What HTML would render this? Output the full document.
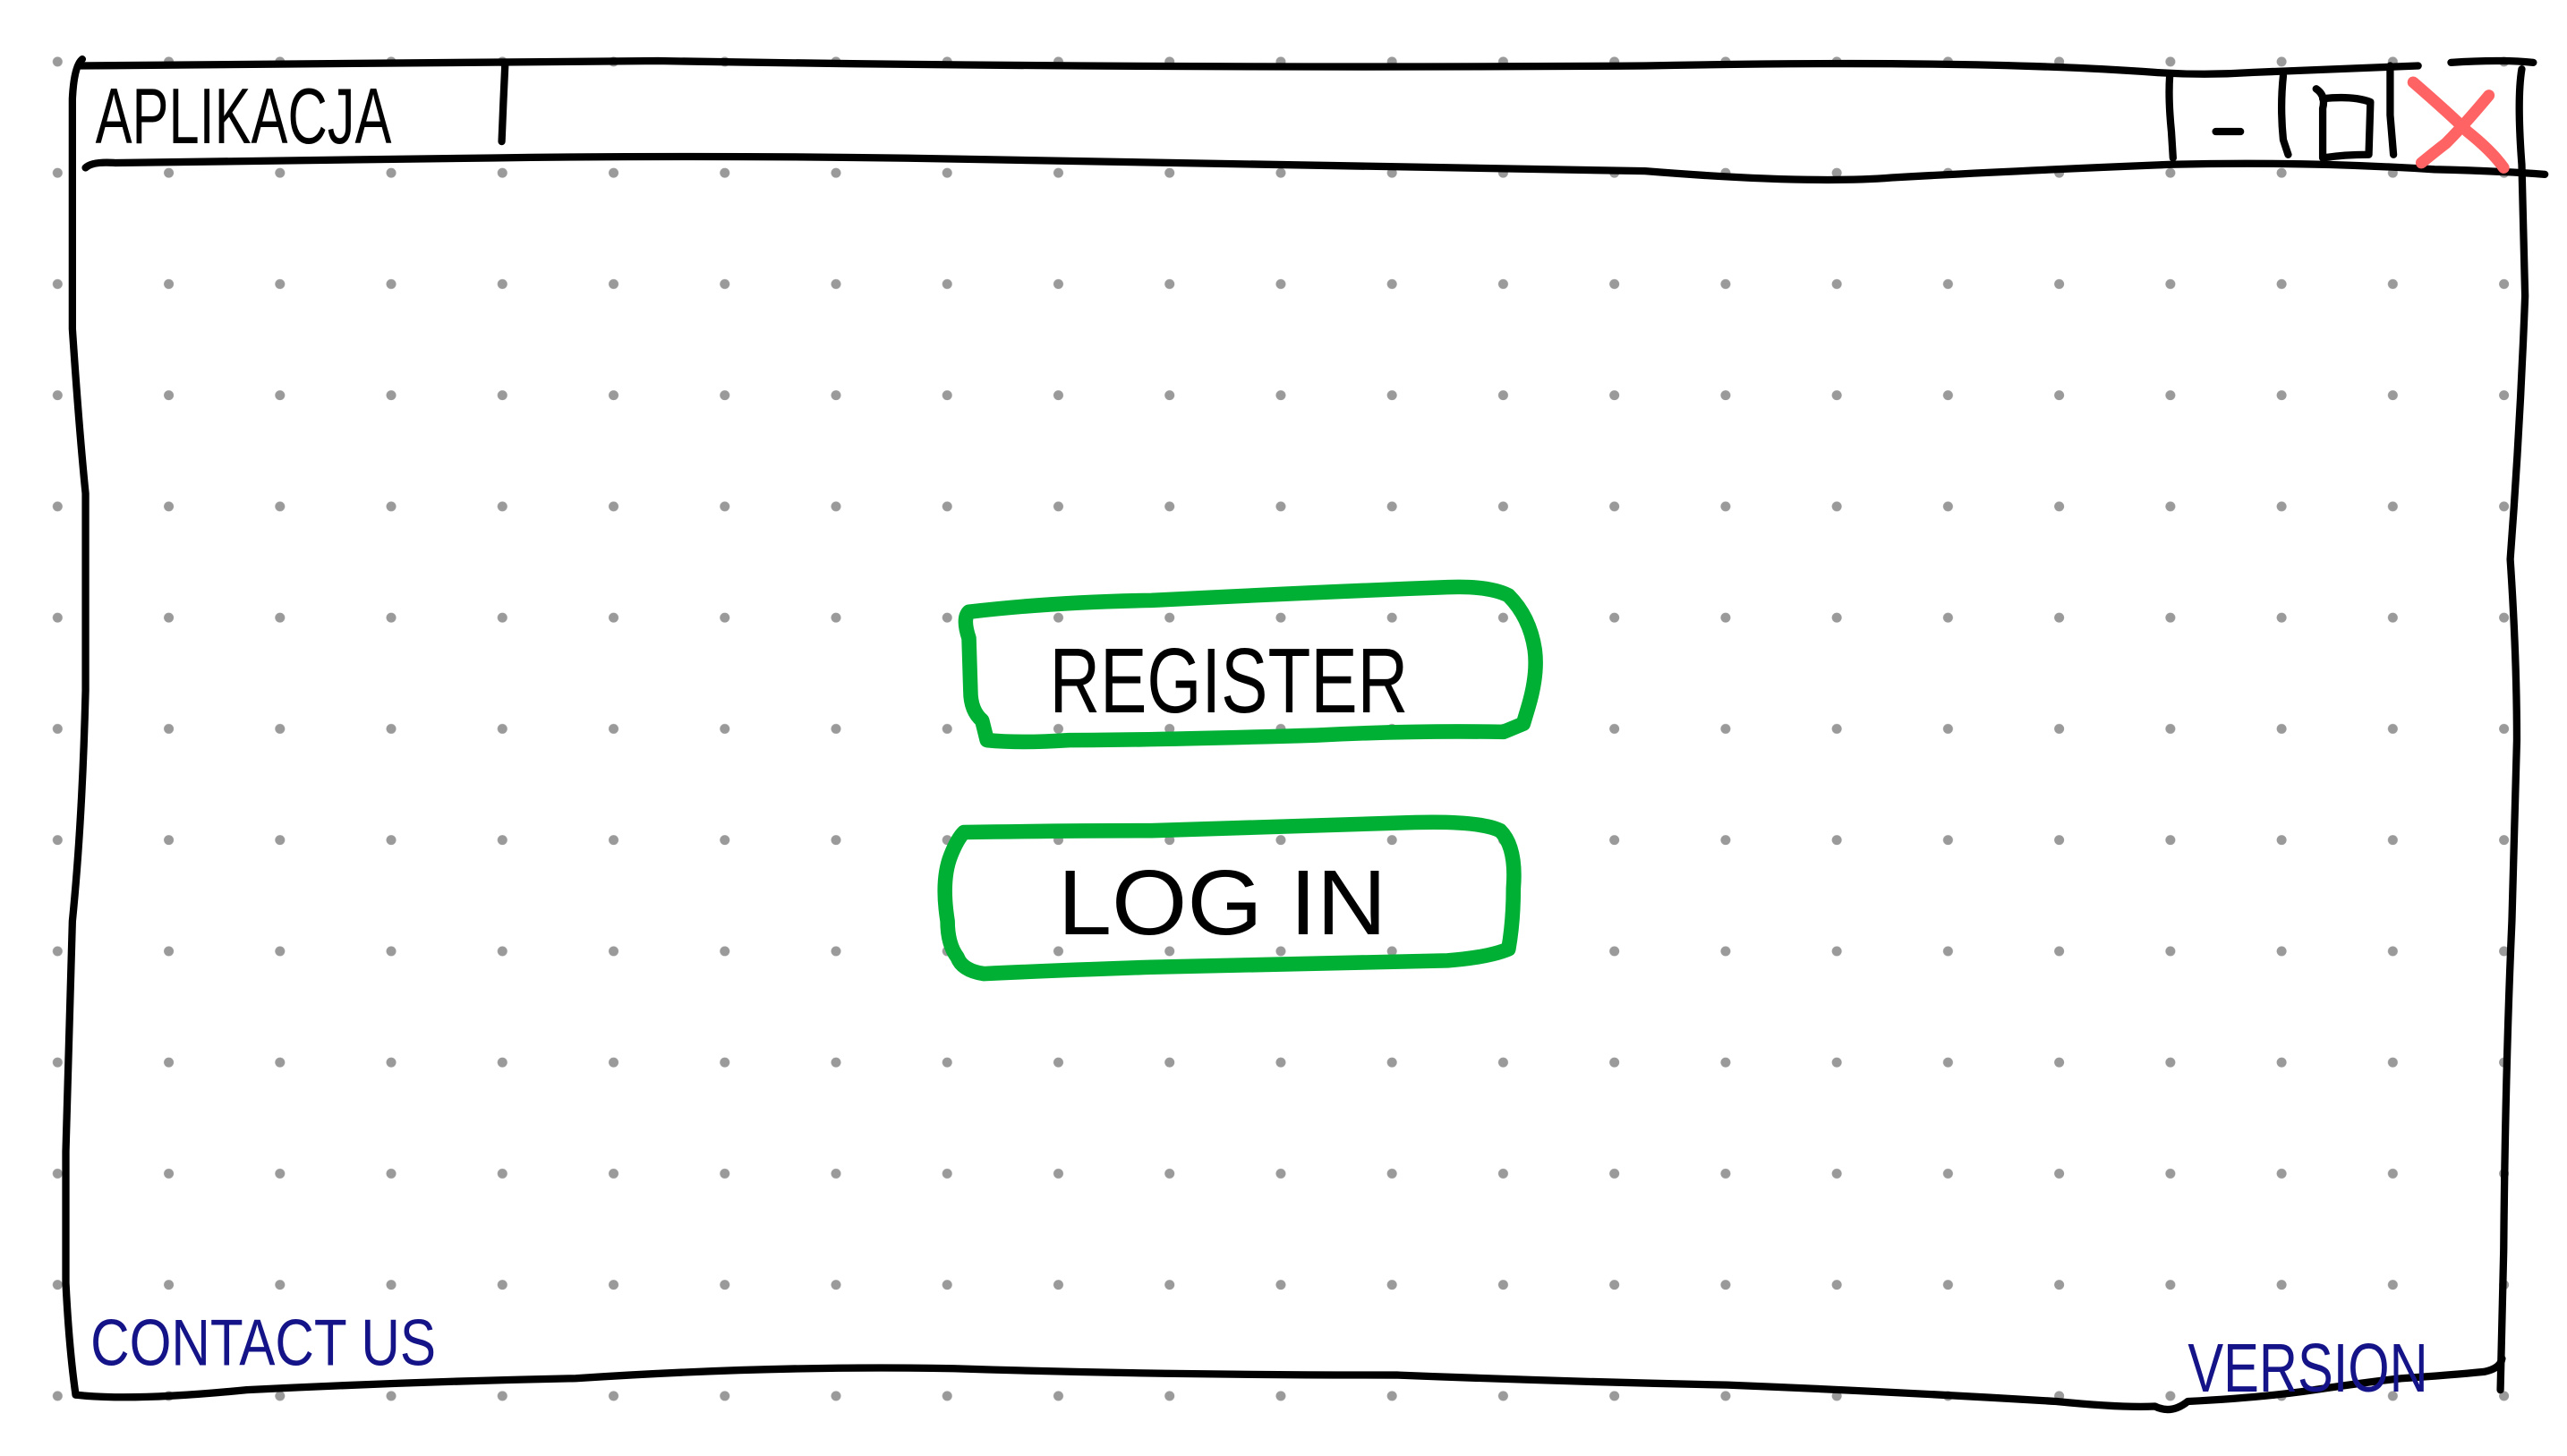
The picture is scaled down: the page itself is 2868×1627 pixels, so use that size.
<!DOCTYPE html>
<html><head><meta charset="utf-8"><style>
html,body{margin:0;padding:0;background:#fff;}
svg{display:block;}
text{font-family:"Liberation Sans Narrow","Liberation Sans",sans-serif;}
</style></head><body>
<svg width="2868" height="1627" viewBox="0 0 1560.5 885.2" preserveAspectRatio="none" xmlns="http://www.w3.org/2000/svg">
<defs>
<pattern id="dots" x="1" y="3.5" width="67.6" height="67.6" patternUnits="userSpaceOnUse">
<circle cx="34" cy="34" r="3" fill="#9a9a9a"/>
</pattern>
</defs>
<rect width="1560.5" height="885.2" fill="#fff"/>
<rect x="0" y="0" width="1560.5" height="885.2" fill="url(#dots)"/>
<g fill="none" stroke="#000" stroke-width="4.5" stroke-linecap="round" stroke-linejoin="round">
<path d="M50 36 Q45 40 44 60 L44 200 Q48 260 52 300 L52 420 Q50 500 44 560 L40 700 L40 780 Q42 820 46 848"/>
<path d="M48 40 Q200 38 400 37 Q700 42 1000 40 Q1200 36 1310 44 Q1340 46 1370 44 Q1420 42 1470 40"/>
<path d="M1490 38 Q1520 36 1540 38"/>
<path d="M1533 42 Q1530 60 1533 100 L1535 180 Q1532 260 1526 340 Q1530 400 1530 450 L1527 560 Q1523 650 1522 760 L1520 845"/>
<path d="M46 848 Q80 852 150 845 Q250 840 350 838 Q470 830 580 832 Q700 836 850 836 Q950 840 1050 842 Q1150 846 1250 852 Q1290 856 1310 855 Q1320 860 1330 852 Q1370 850 1400 846 Q1440 840 1460 838 Q1490 836 1510 834 Q1520 832 1521 826"/>
<path d="M52 102 Q56 98 70 99 Q150 98 300 96 Q450 94 600 97 Q800 100 1000 104 Q1100 112 1150 108 Q1220 104 1320 100 Q1400 98 1480 103 Q1520 104 1547 106"/>
<path d="M307 40 L306 62 L305 86"/>
<path d="M1319 46 Q1318 60 1320 80 L1321 96"/>
<path d="M1347 80 L1362 80"/>
<path d="M1388 46 Q1386 65 1388 85 L1391 94"/>
<path d="M1408 54 Q1414 58 1412 66 L1412 96 Q1425 94 1440 94 L1441 62 Q1430 58 1412 60"/>
<path d="M1453 40 L1453 70 L1455 94"/>
</g>
<path d="M1467 50 Q1490 70 1500 80 Q1515 92 1522 102 M1513 58 Q1498 76 1487 87 Q1478 94 1472 99" fill="none" stroke="#ff6363" stroke-width="7" stroke-linecap="round"/>
<g fill="none" stroke="#00b035" stroke-width="9" stroke-linecap="round" stroke-linejoin="round">
<path d="M589 372 Q640 366 700 365 Q800 360 880 357 Q905 356 917 362 Q930 375 933 395 Q935 410 929 430 L926 440 L914 445 Q860 444 800 447 Q700 450 650 450 Q620 452 600 450 L597 438 Q590 432 590 420 L589 388 Q585 376 589 372 Z"/>
<path d="M586 506 Q650 505 700 505 Q800 502 860 500 Q900 499 912 505 Q922 515 920 540 Q920 560 917 577 Q905 582 880 584 Q800 586 700 588 Q640 590 598 592 Q585 590 582 582 Q576 574 576 560 Q572 535 578 520 Q582 510 586 506 Z"/>
</g>
<text x="58" y="87" font-size="48" textLength="180" lengthAdjust="spacingAndGlyphs" fill="#000">APLIKACJA</text>
<text x="638" y="433" font-size="56" textLength="218" lengthAdjust="spacingAndGlyphs" fill="#000">REGISTER</text>
<text x="643" y="568" font-size="56" textLength="200" lengthAdjust="spacingAndGlyphs" fill="#000">LOG IN</text>
<text x="55" y="830" font-size="40" textLength="210" lengthAdjust="spacingAndGlyphs" fill="#141488">CONTACT US</text>
<text x="1330" y="846" font-size="42" textLength="146" lengthAdjust="spacingAndGlyphs" fill="#141488">VERSION</text>
</svg>
</body></html>
